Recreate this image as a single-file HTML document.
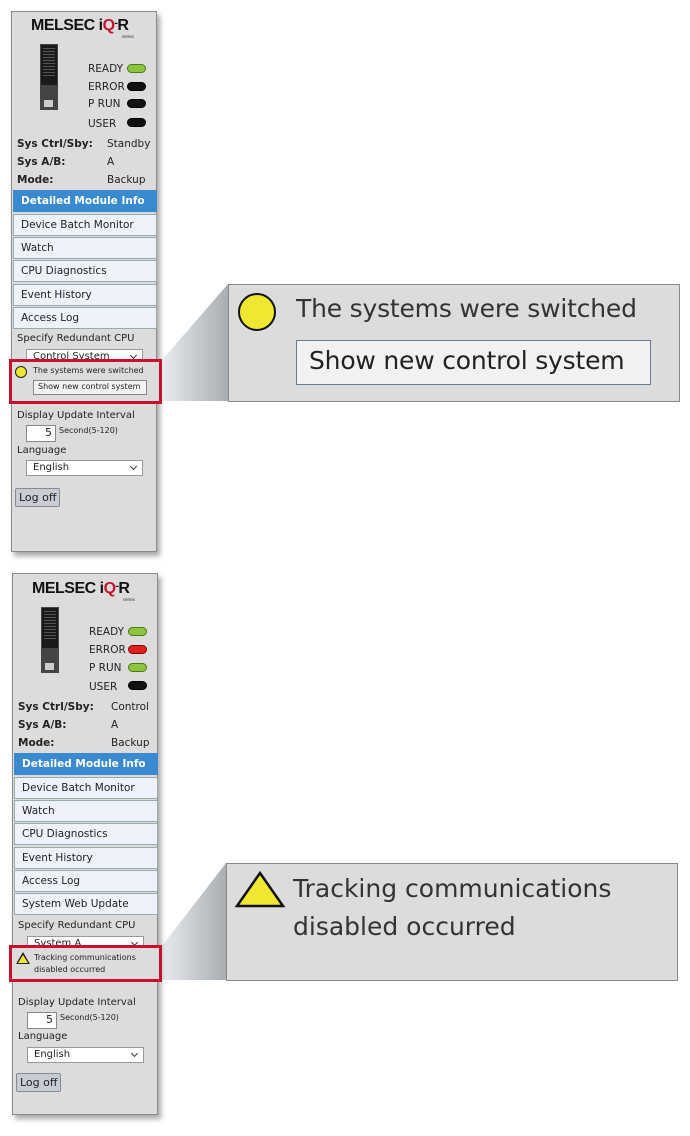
<!DOCTYPE html>
<html><head><meta charset="utf-8"><style>
*{margin:0;padding:0;box-sizing:border-box}
body{width:690px;height:1136px;background:#fff;position:relative;overflow:hidden;font-family:"DejaVu Sans","Liberation Sans",sans-serif;color:#222}
.a{position:absolute}
.panel{position:absolute;background:#dcdcdc;border:1px solid #8a8a8a;box-shadow:3px 4px 5px rgba(0,0,0,.35)}
.t{position:absolute;font-size:10.5px;white-space:nowrap}
.b{font-weight:bold}
.led{position:absolute;width:19px;height:9px;border-radius:5px;background:#111;border:1px solid #000}
.g{background:#8cc63f;border-color:#4a7a10}
.r{background:#e02020;border-color:#800}
.mi{position:absolute;left:2px;width:144px;height:22px;background:#eef3fb;border:1px solid #9aa;font-size:10.5px;padding:4px 0 0 7px;white-space:nowrap}
.act{background:#3a8ad0;color:#fff;font-weight:bold;border-color:#3a8ad0}
.sel{position:absolute;background:#fff;border:1px solid #999;font-size:10px;padding:1px 6px;overflow:hidden;white-space:nowrap}
.sel:after{content:"";position:absolute;right:6px;top:3px;width:4px;height:4px;border-right:1.5px solid #333;border-bottom:1.5px solid #333;transform:rotate(45deg)}
.logo{position:absolute;font-family:"Liberation Sans",sans-serif;font-weight:bold;font-size:16px;letter-spacing:-0.5px;color:#111}
.cpu{position:absolute;width:18px;height:66px;background:#1a1a1a;border:1px solid #444}
.red{position:absolute;border:3px solid #c8102e;background:#dcdcdc}
.co{position:absolute;background:#dcdcdc;border:1px solid #888}
</style></head><body>

<div class="panel" style="left:11px;top:11px;width:146px;height:541px"></div>
<div class="logo" style="left:31px;top:17px">MELSEC <span>i</span><span style="color:#c8102e">Q</span><span style="font-size:10px;vertical-align:4px">-</span>R</div>
<div class="t" style="left:122px;top:34px;font-size:4px">series</div>
<div class="cpu" style="left:40px;top:44px"><div class="a" style="left:2px;top:3px;width:12px;height:28px;background:repeating-linear-gradient(#555 0 1px,#1a1a1a 1px 3px)"></div><div class="a" style="left:0;top:40px;width:16px;height:24px;background:#444"></div><div class="a" style="left:3px;top:55px;width:9px;height:7px;background:#ccc"></div></div>
<div class="t" style="left:88px;top:63px">READY</div><div class="led g" style="left:127px;top:64px"></div>
<div class="t" style="left:88px;top:81px">ERROR</div><div class="led" style="left:127px;top:82px"></div>
<div class="t" style="left:88px;top:98px">P RUN</div><div class="led" style="left:127px;top:99px"></div>
<div class="t" style="left:88px;top:118px">USER</div><div class="led" style="left:127px;top:118px"></div>
<div class="t b" style="left:17px;top:138px">Sys Ctrl/Sby:</div><div class="t" style="left:107px;top:138px">Standby</div>
<div class="t b" style="left:17px;top:156px">Sys A/B:</div><div class="t" style="left:107px;top:156px">A</div>
<div class="t b" style="left:17px;top:174px">Mode:</div><div class="t" style="left:107px;top:174px">Backup</div>
<div class="a" style="left:11px;top:0">
<div class="mi act" style="top:190px">Detailed Module Info</div>
<div class="mi" style="top:214px">Device Batch Monitor</div>
<div class="mi" style="top:237px">Watch</div>
<div class="mi" style="top:260px">CPU Diagnostics</div>
<div class="mi" style="top:284px">Event History</div>
<div class="mi" style="top:307px">Access Log</div>
</div>
<div class="t" style="left:17px;top:333px;font-size:10px">Specify Redundant CPU</div>
<div class="sel" style="left:26px;top:349px;width:117px;height:14px">Control System</div>
<div class="red" style="left:9px;top:359px;width:153px;height:45px"></div>
<div class="a" style="left:15px;top:366px;width:12px;height:12px;border-radius:50%;background:#f0e830;border:1px solid #222"></div>
<div class="t" style="left:33px;top:366px;font-size:8px">The systems were switched</div>
<div class="a" style="left:33px;top:380px;width:114px;height:15px;background:#f2f2f2;border:1px solid #888;font-size:8px;padding:1px 0 0 4px;white-space:nowrap">Show new control system</div>
<div class="t" style="left:17px;top:410px;font-size:10px">Display Update Interval</div>
<div class="a" style="left:26px;top:425px;width:30px;height:17px;background:#fff;border:1px solid #888;font-size:11px;text-align:right;padding-right:3px">5</div>
<div class="t" style="left:59px;top:426px;font-size:8px">Second(5-120)</div>
<div class="t" style="left:17px;top:445px;font-size:10px">Language</div>
<div class="sel" style="left:26px;top:460px;width:117px;height:16px">English</div>
<div class="a" style="left:15px;top:488px;width:45px;height:19px;background:#c8ccd4;border:1px solid #889;border-radius:2px;font-size:11px;padding:2px 0 0 3px">Log off</div>

<svg class="a" style="left:0;top:0" width="690" height="1136"><defs><linearGradient id="gr" x1="0" x2="1"><stop offset="0" stop-color="#e8ebee"/><stop offset="1" stop-color="#a9aeb3"/></linearGradient></defs>
<polygon points="162,360 228,284 228,401 162,401" fill="url(#gr)"/>
<polygon points="162,946 226,863 226,980 162,980" fill="url(#gr)"/></svg>
<div class="co" style="left:228px;top:284px;width:452px;height:118px"></div>
<div class="a" style="left:238px;top:293px;width:38px;height:38px;border-radius:50%;background:#f0e830;border:2px solid #111"></div>
<div class="t" style="left:296px;top:294px;font-size:25px;color:#333;letter-spacing:-0.2px">The systems were switched</div>
<div class="a" style="left:296px;top:340px;width:355px;height:45px;background:#f2f2f2;border:1px solid #6a7a90;font-size:25px;padding:5px 0 0 12px;white-space:nowrap;color:#222;letter-spacing:-0.2px">Show new control system</div>

<div class="panel" style="left:12px;top:573px;width:146px;height:542px"></div>
<div class="logo" style="left:32px;top:580px">MELSEC <span>i</span><span style="color:#c8102e">Q</span><span style="font-size:10px;vertical-align:4px">-</span>R</div>
<div class="t" style="left:123px;top:597px;font-size:4px">series</div>
<div class="cpu" style="left:41px;top:607px"><div class="a" style="left:2px;top:3px;width:12px;height:28px;background:repeating-linear-gradient(#555 0 1px,#1a1a1a 1px 3px)"></div><div class="a" style="left:0;top:40px;width:16px;height:24px;background:#444"></div><div class="a" style="left:3px;top:55px;width:9px;height:7px;background:#ccc"></div></div>
<div class="t" style="left:89px;top:626px">READY</div><div class="led g" style="left:128px;top:627px"></div>
<div class="t" style="left:89px;top:644px">ERROR</div><div class="led r" style="left:128px;top:645px"></div>
<div class="t" style="left:89px;top:662px">P RUN</div><div class="led g" style="left:128px;top:663px"></div>
<div class="t" style="left:89px;top:681px">USER</div><div class="led" style="left:128px;top:681px"></div>
<div class="t b" style="left:18px;top:701px">Sys Ctrl/Sby:</div><div class="t" style="left:111px;top:701px">Control</div>
<div class="t b" style="left:18px;top:719px">Sys A/B:</div><div class="t" style="left:111px;top:719px">A</div>
<div class="t b" style="left:18px;top:737px">Mode:</div><div class="t" style="left:111px;top:737px">Backup</div>
<div class="a" style="left:12px;top:0">
<div class="mi act" style="top:753px">Detailed Module Info</div>
<div class="mi" style="top:777px">Device Batch Monitor</div>
<div class="mi" style="top:800px">Watch</div>
<div class="mi" style="top:823px">CPU Diagnostics</div>
<div class="mi" style="top:847px">Event History</div>
<div class="mi" style="top:870px">Access Log</div>
<div class="mi" style="top:893px">System Web Update</div>
</div>
<div class="t" style="left:18px;top:920px;font-size:10px">Specify Redundant CPU</div>
<div class="sel" style="left:27px;top:936px;width:117px;height:14px">System A</div>
<div class="red" style="left:9px;top:945px;width:153px;height:37px"></div>
<div class="a" style="left:16px;top:952px;width:0;height:0;border-left:7px solid transparent;border-right:7px solid transparent;border-bottom:12px solid #222"></div>
<div class="a" style="left:18px;top:955px;width:0;height:0;border-left:5px solid transparent;border-right:5px solid transparent;border-bottom:8px solid #f0e830"></div>
<div class="t" style="left:34px;top:952px;font-size:8px;line-height:12px">Tracking communications<br>disabled occurred</div>
<div class="t" style="left:18px;top:997px;font-size:10px">Display Update Interval</div>
<div class="a" style="left:27px;top:1012px;width:30px;height:17px;background:#fff;border:1px solid #888;font-size:11px;text-align:right;padding-right:3px">5</div>
<div class="t" style="left:60px;top:1013px;font-size:8px">Second(5-120)</div>
<div class="t" style="left:18px;top:1031px;font-size:10px">Language</div>
<div class="sel" style="left:27px;top:1047px;width:117px;height:16px">English</div>
<div class="a" style="left:16px;top:1073px;width:45px;height:19px;background:#c8ccd4;border:1px solid #889;border-radius:2px;font-size:11px;padding:2px 0 0 3px">Log off</div>

<div class="co" style="left:226px;top:863px;width:452px;height:118px"></div>
<svg class="a" style="left:234px;top:870px" width="52" height="40"><polygon points="26,3 49,36 3,36" fill="#f0e830" stroke="#111" stroke-width="2.5"/></svg>
<div class="t" style="left:293px;top:870px;font-size:25px;line-height:38px;color:#333">Tracking communications<br>disabled occurred</div>
</body></html>
